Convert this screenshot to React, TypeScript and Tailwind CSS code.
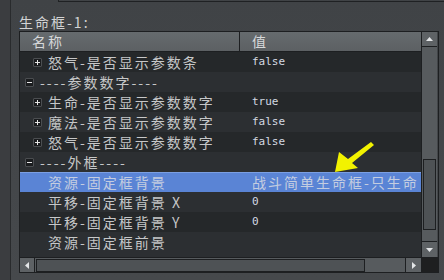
import React from 'react';

type Row = {
  kind: 'child' | 'group' | 'plain';
  name: string;
  value?: string;
  selected?: boolean;
};

const rows: Row[] = [
  { kind: 'child', name: '怒气-是否显示参数条', value: 'false' },
  { kind: 'group', name: '----参数数字----' },
  { kind: 'child', name: '生命-是否显示参数数字', value: 'true' },
  { kind: 'child', name: '魔法-是否显示参数数字', value: 'false' },
  { kind: 'child', name: '怒气-是否显示参数数字', value: 'false' },
  { kind: 'group', name: '----外框----' },
  { kind: 'plain', name: '资源-固定框背景', value: '战斗简单生命框-只生命', selected: true },
  { kind: 'plain', name: '平移-固定框背景 X', value: '0' },
  { kind: 'plain', name: '平移-固定框背景 Y', value: '0' },
  { kind: 'plain', name: '资源-固定框前景', value: '' },
];

const cjk = "font-['Noto_Sans_CJK_SC',sans-serif] text-[14px] tracking-[2px]";
const mono = "font-['DejaVu_Sans_Mono','Noto_Sans_CJK_SC',monospace] text-[11px]";

const TreeBox = ({ open }: { open: boolean }) => (
  <div className="w-[9px] h-[9px] shrink-0 border border-[#4b4e51] bg-[#1b1d1f] rounded-[1px] flex items-center justify-center">
    <svg width="5" height="5" viewBox="0 0 5 5">
      <rect x="0" y="2" width="5" height="1" fill="#e6e6e6" />
      {!open && <rect x="2" y="0" width="1" height="5" fill="#e6e6e6" />}
    </svg>
  </div>
);

const Arrow = ({ dir }: { dir: 'up' | 'down' | 'left' | 'right' }) => {
  const pts = {
    up: '0,4 3.5,0 7,4',
    down: '0,0 7,0 3.5,4',
    left: '4,0 4,7 0,3.5',
    right: '0,0 0,7 4,3.5',
  }[dir];
  const vertical = dir === 'up' || dir === 'down';
  return (
    <svg width={vertical ? 7 : 4} height={vertical ? 4 : 7} viewBox={vertical ? '0 0 7 4' : '0 0 4 7'}>
      <polygon points={pts} fill="#e4e6e8" />
    </svg>
  );
};

const TableRow = ({ row, index }: { row: Row; index: number }) => {
  const bg = row.selected
    ? 'bg-[#5a84d5] border-t border-[#7b9fe2]'
    : index % 2 === 0
    ? 'bg-[#25282a]'
    : 'bg-[#2c2f32]';
  const isCjkValue = row.value && /[^\x00-\x7f]/.test(row.value);
  return (
    <div className={`h-[20px] flex items-center ${bg}`}>
      <div className="w-[220px] h-full flex items-center overflow-hidden whitespace-nowrap">
        {row.kind === 'group' && (
          <div className="pl-[5px] flex items-center gap-[6px]">
            <TreeBox open />
            <span className={`${cjk} text-[#c6c7c8]`}>{row.name}</span>
          </div>
        )}
        {row.kind === 'child' && (
          <div className="pl-[13px] flex items-center gap-[6px]">
            <TreeBox open={false} />
            <span className={`${cjk} text-[#c6c7c8]`}>{row.name}</span>
          </div>
        )}
        {row.kind === 'plain' && (
          <span className={`pl-[28px] ${cjk} ${row.selected ? 'text-[#c4cde0]' : 'text-[#c6c7c8]'}`}>{row.name}</span>
        )}
      </div>
      <div className="flex-1 h-full flex items-center pl-[12px] overflow-hidden whitespace-nowrap">
        {row.value && (
          <span
            className={`${isCjkValue ? cjk : mono} ${row.selected ? 'text-[#c4cde0]' : 'text-[#d4dae2]'}`}
          >
            {row.value}
          </span>
        )}
      </div>
    </div>
  );
};

export default function App() {
  return (
    <div className="w-[444px] h-[280px] relative flex bg-[#44474a] overflow-hidden">
      {/* left neighbour strip */}
      <div className="w-[11px] h-full bg-[#3b3d40] border-r border-[#292b2d]" />

      <div className="flex-1 flex flex-col bg-gradient-to-b from-[#404346] to-[#46494c]">
        <div className="ml-[47px] h-[2px] border-l border-b border-[#1f2123]" />
        <div className={`h-[29px] pt-[12px] pl-[8px] leading-[16px] ${cjk} text-[#d2d3d4]`}>生命框-1:</div>

        {/* property table */}
        <div className="ml-[8px] w-[420px] h-[242px] border border-[#1d1f21] flex flex-col">
          <div className="flex h-[225px]">
            <div className="w-[402px] flex flex-col bg-[#2c2f32] border-r border-[#1d1f21]">
              <div className="h-[20px] shrink-0 flex border-b border-[#1d1f21] bg-gradient-to-b from-[#666b6e] to-[#5c6063]">
                <div className={`w-[220px] border-r border-[#1d1f21] flex items-center pl-[12px] ${cjk} text-[#d6d8da]`}>名称</div>
                <div className={`flex-1 flex items-center pl-[12px] ${cjk} text-[#d6d8da]`}>值</div>
              </div>
              {rows.map((r, i) => (
                <TableRow key={i} row={r} index={i} />
              ))}
            </div>

            {/* vertical scrollbar */}
            <div className="w-[15px] flex flex-col bg-[#575b5e]">
              <div className="h-[15px] shrink-0 bg-[#5e6265] border-b border-[#1d1f21] flex items-center justify-center">
                <Arrow dir="up" />
              </div>
              <div className="flex-1 flex flex-col pt-[112px] px-[1px]">
                <div className="h-[71px] border border-[#1d1f21] bg-[#4e5255]" />
              </div>
              <div className="h-[16px] shrink-0 bg-[#5e6265] border-t border-[#1d1f21] flex items-center justify-center">
                <Arrow dir="down" />
              </div>
            </div>
          </div>

          {/* horizontal scrollbar */}
          <div className="flex h-[15px] border-t border-[#1d1f21]">
            <div className="w-[402px] flex bg-[#575b5e] border-r border-[#1d1f21]">
              <div className="w-[15px] shrink-0 bg-[#5e6265] border-r border-[#1d1f21] flex items-center justify-center">
                <Arrow dir="left" />
              </div>
              <div className="flex-1 flex items-center pl-[1px]">
                <div className="w-[329px] h-[13px] border border-[#1d1f21] bg-[#4e5255]" />
              </div>
              <div className="w-[16px] shrink-0 bg-[#5e6265] border-l border-[#1d1f21] flex items-center justify-center">
                <Arrow dir="right" />
              </div>
            </div>
            <div className="flex-1 bg-[#1e1f20]" />
          </div>
        </div>
      </div>

      {/* yellow annotation arrow */}
      <svg className="absolute left-0 top-0 pointer-events-none" width="444" height="280" viewBox="0 0 444 280">
        <polygon
          points="335,172 339,152 348,159 371,142 374,145 352,163 358,168"
          fill="#f2f200"
        />
      </svg>
    </div>
  );
}
